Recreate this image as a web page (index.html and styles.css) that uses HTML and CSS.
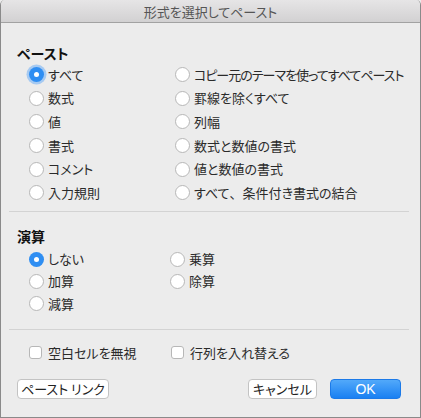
FILE: index.html
```html
<!DOCTYPE html>
<html>
    <head>
        <title>形式を選択してペースト</title>
        <link rel="stylesheet" href="styles.css">
    </head>
    <body>
        <div class="dialog">
            <div class="titlebar">形式を選択してペースト</div>
            <div class="content">
                <div class="group">
                    <h2 class="groupTitle">ペースト</h2>
                    <div class="options pasteGrid">
                        <label class="opt"><input type="radio" name="paste" class="focused" checked>すべて</label>
                        <label class="opt"><input type="radio" name="paste">数式</label>
                        <label class="opt"><input type="radio" name="paste">値</label>
                        <label class="opt"><input type="radio" name="paste">書式</label>
                        <label class="opt"><input type="radio" name="paste">コメント</label>
                        <label class="opt"><input type="radio" name="paste">入力規則</label>
                        <label class="opt longOpt"><input type="radio" name="paste">コピー元のテーマを使ってすべてペースト</label>
                        <label class="opt"><input type="radio" name="paste">罫線を除くすべて</label>
                        <label class="opt"><input type="radio" name="paste">列幅</label>
                        <label class="opt"><input type="radio" name="paste">数式と数値の書式</label>
                        <label class="opt"><input type="radio" name="paste">値と数値の書式</label>
                        <label class="opt"><input type="radio" name="paste">すべて<span class="comma">、</span>条件付き書式の結合</label>
                    </div>
                </div>
                <hr class="sep sepFirst">
                <div class="group">
                    <h2 class="groupTitle opsTitle">演算</h2>
                    <div class="options opsGrid">
                        <label class="opt"><input type="radio" name="ops" checked>しない</label>
                        <label class="opt"><input type="radio" name="ops">加算</label>
                        <label class="opt"><input type="radio" name="ops">減算</label>
                        <label class="opt"><input type="radio" name="ops">乗算</label>
                        <label class="opt"><input type="radio" name="ops">除算</label>
                    </div>
                </div>
                <hr class="sep sepSecond">
                <div class="checks">
                    <label class="opt chk1"><input type="checkbox">空白セルを無視</label>
                    <label class="opt"><input type="checkbox">行列を入れ替える</label>
                </div>
                <div class="buttons">
                    <button class="btn linkBtn">ペースト リンク</button>
                    <span class="spacer"></span>
                    <button class="btn cancelBtn">キャンセル</button>
                    <button class="btn okBtn">OK</button>
                </div>
            </div>
        </div>
    </body>
</html>
```
FILE: styles.css
```css
html, body{
    margin: 0;
    padding: 0;
    background-color: #ececec;
}

body{
    font-family: "Noto Sans CJK JP", "Noto Sans", sans-serif;
    font-feature-settings: "palt";
    color: #2a2a2a;
    font-size: 13px;
}

.dialog{
    width: 421px;
    height: 418px;
    box-sizing: border-box;
    border: 1px solid #8a8a8a;
    border-top: none;
    border-radius: 5px 5px 0 0;
    background-color: #ececec;
    overflow: hidden;
}

.titlebar{
    height: 22px;
    line-height: 23px;
    border-bottom: 1px solid #a2a2a2;
    background: linear-gradient(#e6e5e6, #d2d1d2);
    text-align: center;
    font-size: 13px;
    color: #555555;
}

.content{
    padding: 0 11px 0 8px;
}

.groupTitle{
    margin: 0 0 0 8px;
    font-size: 14px;
    font-weight: bold;
    line-height: 16px;
    color: #111111;
}

.group:first-child .groupTitle{
    margin-top: 22px;
}

.options{
    display: grid;
    grid-auto-flow: column;
    padding-left: 20px;
}

.pasteGrid{
    margin-top: 2px;
    grid-template-rows: repeat(6, 23.6px);
    grid-template-columns: 146px 1fr;
}

.opsTitle{
    margin-top: 16.5px;
}

.opsGrid{
    margin-top: 4px;
    grid-template-rows: repeat(3, 22.25px);
    grid-template-columns: 141px 1fr;
}

.opt{
    display: flex;
    align-items: center;
    white-space: nowrap;
    line-height: 16px;
}

.longOpt{
    letter-spacing: -1px;
}

.comma{
    font-feature-settings: normal;
}

input[type="radio"]{
    appearance: none;
    -webkit-appearance: none;
    margin: 0 4px 0 0;
    width: 15px;
    height: 15px;
    box-sizing: border-box;
    border: 1px solid #b7b7b7;
    border-radius: 50%;
    background-color: #ffffff;
    flex-shrink: 0;
    position: relative;
}

input[type="radio"]:checked{
    border: none;
    background-color: #2f8ef2;
}

input[type="radio"]:checked::after{
    content: "";
    position: absolute;
    left: 5px;
    top: 5px;
    width: 5px;
    height: 5px;
    border-radius: 50%;
    background-color: #ffffff;
}

input.focused{
    box-shadow: 0 0 0 2.5px rgba(96, 168, 248, 0.5);
}

.sep{
    border: none;
    border-top: 1px solid #d3d3d3;
    margin: 0;
}

.sepFirst{
    margin-top: 6px;
}

.sepSecond{
    margin-top: 14px;
}

.checks{
    display: flex;
    height: 20px;
    margin-top: 13px;
    padding-left: 20px;
}

.chk1{
    width: 142px;
}

input[type="checkbox"]{
    appearance: none;
    -webkit-appearance: none;
    margin: 0 6px 0 0;
    width: 13px;
    height: 13px;
    box-sizing: border-box;
    border: 1px solid #b7b7b7;
    border-radius: 3px;
    background-color: #ffffff;
}

.buttons{
    display: flex;
    margin-top: 16.5px;
    padding: 0 8px;
}

.spacer{
    flex: 1;
}

.btn{
    font-family: "Noto Sans CJK JP", "Noto Sans", sans-serif;
    font-feature-settings: "palt";
    height: 20px;
    padding: 0;
    font-size: 13px;
    line-height: 18px;
    color: #222222;
    background-color: #ffffff;
    border: 1px solid #c3c3c3;
    border-radius: 4px;
}

.linkBtn{
    width: 92px;
}

.cancelBtn{
    width: 69px;
    margin-right: 13px;
}

.okBtn{
    width: 71px;
    color: #ffffff;
    font-family: "Liberation Sans", sans-serif;
    font-size: 14px;
    border: 1px solid #1c7ae8;
    background: linear-gradient(#52a9fa, #1a80f2);
}
```
